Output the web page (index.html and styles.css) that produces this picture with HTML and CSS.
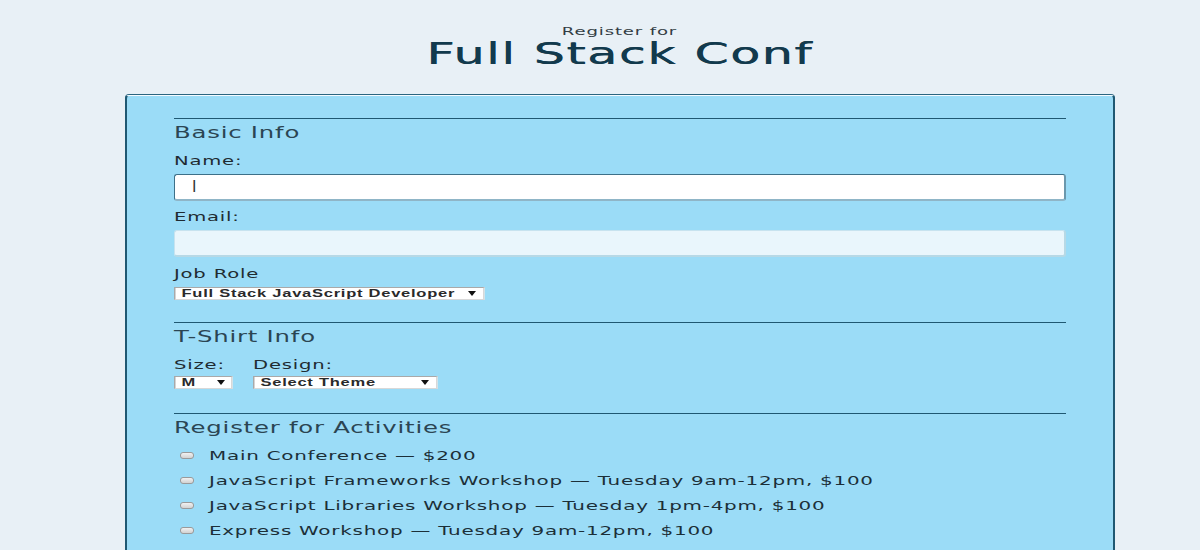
FILE: index.html
```html
<!DOCTYPE html>
<html lang="en">
<head>
<meta charset="utf-8">
<title>Full Stack Conf Registration</title>
<link rel="stylesheet" href="styles.css">
</head>
<body>
<header class="page-header">
  <p class="pre-title"><span class="wide wide--center">Register for</span></p>
  <h1 class="title"><span class="wide wide--center">Full Stack Conf</span></h1>
</header>
<form class="card">
  <fieldset class="section">
    <legend class="legend"><span class="wide">Basic Info</span></legend>
    <label class="label" for="name"><span class="wide">Name:</span></label>
    <input class="text-input text-input--active" id="name" type="text" value="I">
    <label class="label" for="mail"><span class="wide">Email:</span></label>
    <input class="text-input text-input--idle" id="mail" type="email">
    <label class="label" for="title"><span class="wide">Job Role</span></label>
    <span class="select-wrap select-wrap--role"><select class="select" id="title"><option>Full Stack JavaScript Developer</option></select></span>
  </fieldset>
  <fieldset class="section section--shirt">
    <legend class="legend"><span class="wide">T-Shirt Info</span></legend>
    <div class="shirt-row">
      <div class="shirt-col">
        <label class="label" for="size"><span class="wide">Size:</span></label>
        <span class="select-wrap select-wrap--size"><select class="select" id="size"><option>M</option></select></span>
      </div>
      <div class="shirt-col">
        <label class="label" for="design"><span class="wide">Design:</span></label>
        <span class="select-wrap select-wrap--design"><select class="select" id="design"><option>Select Theme</option></select></span>
      </div>
    </div>
  </fieldset>
  <fieldset class="section section--activities">
    <legend class="legend"><span class="wide">Register for Activities</span></legend>
    <label class="activity"><input class="check" type="checkbox"><span class="wide">Main Conference — $200</span></label>
    <label class="activity"><input class="check" type="checkbox"><span class="wide">JavaScript Frameworks Workshop — Tuesday 9am-12pm, $100</span></label>
    <label class="activity"><input class="check" type="checkbox"><span class="wide">JavaScript Libraries Workshop — Tuesday 1pm-4pm, $100</span></label>
    <label class="activity"><input class="check" type="checkbox"><span class="wide">Express Workshop — Tuesday 9am-12pm, $100</span></label>
  </fieldset>
</form>
</body>
</html>
```
FILE: styles.css
```css
* { box-sizing: border-box; }
html, body { height: 100%; }
body {
  margin: 0;
  background: #e8f0f6;
  font-family: "DejaVu Sans", "Liberation Sans", sans-serif;
  color: #1d3644;
  overflow: hidden;
}
/* the typography of this design is horizontally extended */
.wide {
  display: inline-block;
  white-space: nowrap;
  transform: scaleX(var(--sx, 1.55));
  transform-origin: left center;
}
.wide--center { transform-origin: center center; }
.page-header {
  width: 990px;
  margin-left: 125px;
  text-align: center;
  padding-top: 24px;
}
.pre-title {
  margin: 0;
  font-size: 10.5px;
  letter-spacing: 0.5px;
  color: #333d44;
  line-height: 14px;
  --sx: 1.72;
}
.title {
  margin: 0;
  font-size: 30px;
  font-weight: 500;
  letter-spacing: 1px;
  line-height: 32px;
  color: #123a4d;
  text-shadow: 0.4px 0 0 #123a4d;
  --sx: 1.63;
}
.card {
  width: 990px;
  margin: 25px 0 0 125px;
  min-height: 600px;
  background: #9bdcf7;
  border: 2px solid #1f5872;
  border-top: 1px solid #f4fbff;
  border-radius: 4px 4px 0 0;
  box-shadow: 0 -1px 0 #2b6580;
  padding: 22px 47px 0 47px;
}
.section {
  border: 0;
  border-top: 1px solid #1f5872;
  margin: 0;
  padding: 0;
  display: flex;
  flex-direction: column;
  align-items: flex-start;
}
.section + .section { margin-top: 22px; }
.section--activities.section { margin-top: 24px; }
.legend {
  padding: 0;
  float: left;
  width: 100%;
  margin: 5px 0 12px;
  font-size: 15.5px;
  letter-spacing: 0.5px;
  color: #2b4553;
  line-height: 18px;
  --sx: 1.57;
}
.label {
  display: block;
  font-size: 12px;
  letter-spacing: 0.5px;
  line-height: 14px;
  color: #1f2b31;
  margin-bottom: 6px;
  --sx: 1.63;
}
.text-input {
  display: block;
  width: 892px;
  height: 27px;
  border-radius: 3px;
  padding: 0 17px;
  font-family: "Liberation Sans", sans-serif;
  font-size: 16px;
  color: #333;
  margin-bottom: 9px;
  outline: none;
}
.text-input--active {
  background: #fff;
  border: 1px solid #3d7088;
  border-right: 2px solid #6b98ad;
  border-bottom: 2px solid #8fb5c7;
}
.text-input--idle {
  background: #e9f6fc;
  border: 1px solid #c7e3ef;
  border-right: 2px solid #b7d9e6;
  border-bottom: 2px solid #b7d9e6;
  margin-bottom: 10px;
}
.select-wrap {
  position: relative;
  display: block;
  height: 13px;
}
.select-wrap::after {
  content: "";
  position: absolute;
  right: 8px;
  top: 4px;
  border-left: 4px solid transparent;
  border-right: 4px solid transparent;
  border-top: 5px solid #111;
  pointer-events: none;
}
.select {
  -webkit-appearance: none;
  appearance: none;
  display: block;
  width: 66.67%;
  height: 13px;
  margin: 0;
  border: 1px solid #a9a9a9;
  border-right-color: #d8d8d8;
  border-bottom-color: #d8d8d8;
  border-radius: 0;
  background: #fff;
  font-family: "Liberation Sans", "DejaVu Sans", sans-serif;
  font-size: 11px;
  font-weight: 700;
  letter-spacing: 0.5px;
  line-height: 11px;
  color: #2a2a2a;
  padding: 0 0 0 4px;
  transform: scaleX(1.5);
  transform-origin: left top;
}
.select-wrap--role { width: 310px; }
.select-wrap--size { width: 59px; }
.select-wrap--design { width: 184px; }
.shirt-row {
  display: flex;
  gap: 20px;
}
.shirt-col {
  display: flex;
  flex-direction: column;
  align-items: flex-start;
}
.shirt-col .label { margin-bottom: 4px; }
.activity {
  display: flex;
  align-items: center;
  height: 25px;
  font-size: 13px;
  letter-spacing: 0.5px;
  color: #1c2f38;
  padding-left: 6px;
  --sx: 1.53;
}
.section--activities .legend { margin-bottom: 6px; }
.check {
  -webkit-appearance: none;
  appearance: none;
  flex: none;
  width: 14px;
  height: 7px;
  margin: 0 15px 0 0;
  border: 1px solid #9a9a9a;
  border-radius: 3px;
  background: linear-gradient(#f1f1f1, #d2d2d2);
}
```
